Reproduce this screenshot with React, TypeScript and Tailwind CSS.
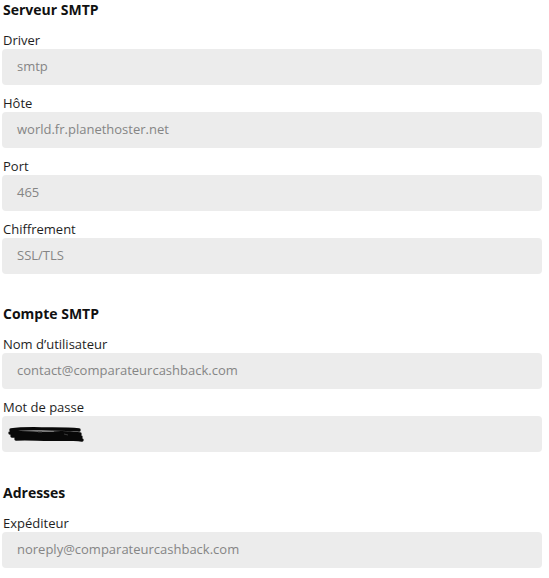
import React from 'react';

type Field = { label: string; value?: string; redacted?: boolean };

const sections: { title: string; gap: string; fields: Field[] }[] = [
  {
    title: 'Serveur SMTP',
    gap: '',
    fields: [
      { label: 'Driver', value: 'smtp' },
      { label: 'Hôte', value: 'world.fr.planethoster.net' },
      { label: 'Port', value: '465' },
      { label: 'Chiffrement', value: 'SSL/TLS' },
    ],
  },
  {
    title: 'Compte SMTP',
    gap: 'mt-[30px]',
    fields: [
      { label: 'Nom d’utilisateur', value: 'contact@comparateurcashback.com' },
      { label: 'Mot de passe', redacted: true },
    ],
  },
  {
    title: 'Adresses',
    gap: 'mt-[31px]',
    fields: [{ label: 'Expéditeur', value: 'noreply@comparateurcashback.com' }],
  },
];

// hand-drawn redaction over the password value
function Scribble() {
  return (
    <svg width="76" height="16" viewBox="0 0 76 16" className="block">
      <path
        d="M3 4 C16 2 30 3 44 3 C54 3 62 3 71 4 M2 7 C18 6 32 8 46 7 C56 6 64 7 72 8 M4 10 C18 9 34 11 50 10 C60 9 66 11 73 11 M8 13 C22 12 36 14 52 13 C62 13 68 13 74 14"
        stroke="#080808"
        strokeWidth="3.4"
        strokeLinecap="round"
        fill="none"
      />
      <path d="M30 6 L34 6 M56 8 L60 9" stroke="#3a3a3a" strokeWidth="1" />
    </svg>
  );
}

export default function App() {
  return (
    <div className="w-[549px] bg-white pl-[2px] pr-[7px] font-['Open_Sans',sans-serif]">
      {sections.map((s) => (
        <section key={s.title} className={s.gap}>
          <h2 className="mb-[11px] pl-px text-[14px] font-bold leading-5 text-[#111]">{s.title}</h2>
          {s.fields.map((f) => (
            <div key={f.label} className="mb-[9px]">
              <div className="pl-px text-[13px] leading-[18px] text-[#1e1e1e]">{f.label}</div>
              <div className="flex h-9 items-center rounded-[4px] bg-[#ececec] px-[15px] text-[13px] text-[#858585]">
                {f.redacted ? (
                  <div className="-ml-[9px]">
                    <Scribble />
                  </div>
                ) : (
                  f.value
                )}
              </div>
            </div>
          ))}
        </section>
      ))}
    </div>
  );
}
